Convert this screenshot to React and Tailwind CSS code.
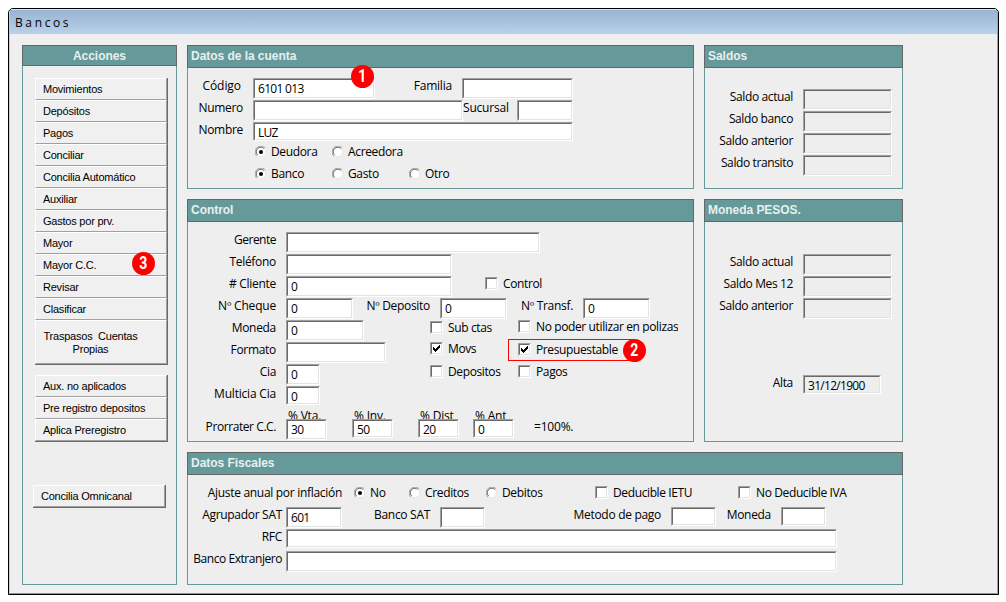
import clsx from 'clsx'

const ACCIONES = [
  'Movimientos',
  'Depósitos',
  'Pagos',
  'Conciliar',
  'Concilia Automático',
  'Auxiliar',
  'Gastos por prv.',
  'Mayor',
  'Mayor C.C.',
  'Revisar',
  'Clasificar',
]

const REGISTROS = ['Aux. no aplicados', 'Pre registro depositos', 'Aplica Preregistro']

const PRORRATEO = [
  { titulo: '% Vta.', valor: '30', clase: 'w-[41px]', alto: 'h-[21px]' },
  { titulo: '% Inv.', valor: '50', clase: 'ml-[25px] w-[41px]', alto: 'h-[19px]' },
  { titulo: '% Dist', valor: '20', clase: 'ml-[25px] w-[41px]', alto: 'h-[19px]' },
  { titulo: '% Ant', valor: '0', clase: 'ml-[14px] w-[41px]', alto: 'h-[19px]' },
]

function Panel({ titulo, className, centrado, children }) {
  return (
    <section className={clsx('flex flex-col', className)}>
      <h2
        className={clsx(
          'shrink-0 border border-[#666666] bg-[#669999] font-["Liberation_Sans",Arial,sans-serif] text-[12px] leading-[20px] font-bold tracking-[-0.04px] whitespace-nowrap text-[#e6f0f0]',
          centrado ? 'h-[21px] text-center' : 'h-[23px] pl-[3px]',
        )}
      >
        {titulo}
      </h2>
      <div className="grow border border-t-0 border-[#669999] bg-[#eeeeee]">{children}</div>
    </section>
  )
}

function Fila({ className, children }) {
  return <div className={clsx('flex h-[22px] items-start', className)}>{children}</div>
}

function Etiqueta({ className, tracking = 'tracking-[-0.3px]', children }) {
  return (
    <span className={clsx('shrink-0 text-right leading-[15px] whitespace-nowrap', tracking, className)}>
      {children}
    </span>
  )
}

function Campo({ valor, className, alto = 'h-[21px]', inactivo }) {
  return (
    <div className={clsx('shrink-0 border border-t-[#a0a0a0] border-r-white border-b-white border-l-[#a0a0a0]', alto, className)}>
      <div
        className={clsx(
          'h-full border border-t-[#696969] border-r-[#e3e3e3] border-b-[#e3e3e3] border-l-[#696969] pl-[3px] leading-[17px] tracking-[-0.7px] whitespace-nowrap',
          inactivo ? 'bg-[#eeeeee]' : 'bg-white',
        )}
      >
        {valor}
      </div>
    </div>
  )
}

function Radio({ activo, className, children }) {
  return (
    <div className={clsx('flex shrink-0 items-start gap-1 tracking-[-0.35px] whitespace-nowrap', className)}>
      <svg className="mt-[2px] h-3 w-3 shrink-0" viewBox="0 0 12 12">
        <circle cx="6" cy="6" r="5" fill="#fff" />
        <path d="M1.8 10.2 A5.5 5.5 0 0 1 10.2 1.8" fill="none" stroke="#a0a0a0" />
        <path d="M2.6 9 A4.5 4.5 0 0 1 9 2.6" fill="none" stroke="#696969" />
        <path d="M2.6 9.4 A4.6 4.6 0 0 0 9.4 2.6" fill="none" stroke="#e3e3e3" />
        {activo && <circle cx="6" cy="6" r="2" fill="#000" />}
      </svg>
      <span className="leading-[15px]">{children}</span>
    </div>
  )
}

function Casilla({ activo, className, children }) {
  return (
    <div className={clsx('flex shrink-0 items-start gap-[5px] tracking-[-0.38px] whitespace-nowrap', className)}>
      <div className="mt-px h-[13px] w-[13px] shrink-0 border border-t-[#a0a0a0] border-r-white border-b-white border-l-[#a0a0a0]">
        <div className="h-[11px] w-[11px] border border-t-[#696969] border-r-[#e3e3e3] border-b-[#e3e3e3] border-l-[#696969] bg-white">
          {activo && (
            <svg className="h-[9px] w-[9px]" viewBox="0 0 9 9" shapeRendering="crispEdges">
              <path d="M1 3h1v1h1v1h1v-1h1v-1h1v-1h1v-1h1v3h-1v1h-1v1h-1v1h-1v1h-1v-1h-1v-1h-1z" />
            </svg>
          )}
        </div>
      </div>
      <span className="leading-[15px]">{children}</span>
    </div>
  )
}

function Boton({ className, children }) {
  return (
    <button
      type="button"
      className={clsx(
        'block w-[132px] border border-t-white border-r-[#a0a0a0] border-b-[#a0a0a0] border-l-white bg-[#f0f0f0] pl-[7px] text-left whitespace-pre',
        className,
      )}
    >
      {children}
    </button>
  )
}

function GrupoBotones({ className, children }) {
  return (
    <div
      className={clsx(
        'w-[133px] border-r border-b border-[#696969] font-["Liberation_Sans",Arial,sans-serif] text-[11px] leading-[20px] tracking-[-0.22px]',
        className,
      )}
    >
      {children}
    </div>
  )
}

// Globo rojo numerado, superpuesto a la ventana
function Marcador({ numero, className }) {
  return (
    <div
      className={clsx(
        'absolute flex h-[23px] w-[23px] items-center justify-center rounded-full bg-[#ff0000] font-[Roboto,sans-serif] text-[18px] leading-none font-bold tracking-normal text-white',
        className,
      )}
    >
      <span className="-mt-px scale-x-[0.78]">{numero}</span>
    </div>
  )
}

function Acciones() {
  return (
    <Panel titulo="Acciones" centrado className="h-[540px] w-[155px]">
      <div className="pt-3 pl-3">
        <GrupoBotones>
          {ACCIONES.map(accion => (
            <Boton key={accion} className="h-[22px]">{accion}</Boton>
          ))}
          <Boton className="h-11 leading-[13px]">
            <span className="block w-[95px] pt-px text-center">{'Traspasos  Cuentas\nPropias'}</span>
          </Boton>
        </GrupoBotones>
        <GrupoBotones className="mt-[10px]">
          {REGISTROS.map(registro => (
            <Boton key={registro} className="h-[22px]">{registro}</Boton>
          ))}
        </GrupoBotones>
        <GrupoBotones className="mt-[43px] -ml-[2px]">
          <Boton className="h-[22px]">Concilia Omnicanal</Boton>
        </GrupoBotones>
      </div>
    </Panel>
  )
}

function DatosCuenta() {
  return (
    <Panel titulo="Datos de la cuenta" className="h-[144px] w-[507px]">
      <div className="pt-[10px]">
        <Fila>
          <Etiqueta tracking="tracking-[-0.05px]" className="w-[53px]">Código</Etiqueta>
          <Campo valor="6101 013" className="ml-3 w-[122px]" />
          <Etiqueta tracking="tracking-[-0.2px]" className="w-[77px]">Familia</Etiqueta>
          <Campo className="ml-[10px] w-[111px]" />
        </Fila>
        <Fila>
          <Etiqueta className="w-[55px]">Numero</Etiqueta>
          <Campo className="ml-[10px] w-[210px]" />
          <Etiqueta tracking="tracking-[-0.2px]" className="w-[44px]">Sucursal</Etiqueta>
          <Campo className="ml-[10px] w-[56px]" />
        </Fila>
        <Fila>
          <Etiqueta className="w-[55px]">Nombre</Etiqueta>
          <Campo valor="LUZ" className="ml-[10px] w-[320px]" alto="h-[19px]" />
        </Fila>
        <Fila className="pl-[67px]">
          <Radio activo className="w-[77px]">Deudora</Radio>
          <Radio>Acreedora</Radio>
        </Fila>
        <Fila className="pl-[67px]">
          <Radio activo className="w-[77px]">Banco</Radio>
          <Radio className="w-[77px]">Gasto</Radio>
          <Radio>Otro</Radio>
        </Fila>
      </div>
    </Panel>
  )
}

function Control() {
  return (
    <Panel titulo="Control" className="h-[243px] w-[507px]">
      <div className="pt-[10px]">
        <Fila>
          <Etiqueta tracking="tracking-[-0.5px]" className="w-[88px]">Gerente</Etiqueta>
          <Campo className="ml-[10px] w-[254px]" />
        </Fila>
        <Fila>
          <Etiqueta className="w-[88px]">Teléfono</Etiqueta>
          <Campo className="ml-[10px] w-[166px]" />
        </Fila>
        <Fila>
          <Etiqueta className="w-[88px]">{'# Cliente'}</Etiqueta>
          <Campo valor="0" className="ml-[10px] w-[166px]" />
          <Casilla className="ml-[33px]">Control</Casilla>
        </Fila>
        <Fila>
          <Etiqueta tracking="tracking-[-0.2px]" className="w-[88px]">Nº Cheque</Etiqueta>
          <Campo valor="0" className="ml-[10px] w-[67px]" />
          <Etiqueta className="w-[77px]">Nº Deposito</Etiqueta>
          <Campo valor="0" className="ml-[10px] w-[67px]" />
          <Etiqueta className="w-[66px]">Nº Transf.</Etiqueta>
          <Campo valor="0" className="ml-[10px] w-[67px]" />
        </Fila>
        <Fila>
          <Etiqueta className="w-[88px]">Moneda</Etiqueta>
          <Campo valor="0" className="ml-[10px] w-[78px]" />
          <Casilla className="ml-[66px] w-[88px]">Sub ctas</Casilla>
          <Casilla className="-mt-px h-[14px] overflow-hidden">No poder utilizar en polizas</Casilla>
        </Fila>
        <Fila>
          <Etiqueta className="w-[88px]">Formato</Etiqueta>
          <Campo className="ml-[10px] w-[100px]" />
          <Casilla activo className="-mt-px ml-[44px] w-[88px]">Movs</Casilla>
          <Casilla activo>Presupuestable</Casilla>
        </Fila>
        <Fila>
          <Etiqueta className="w-[88px]">Cia</Etiqueta>
          <Campo valor="0" className="ml-[10px] w-[34px]" />
          <Casilla className="ml-[110px] w-[88px]">Depositos</Casilla>
          <Casilla>Pagos</Casilla>
        </Fila>
        <Fila>
          <Etiqueta tracking="tracking-[-0.2px]" className="w-[88px]">Multicia Cia</Etiqueta>
          <Campo valor="0" className="ml-[10px] w-[34px]" alto="h-[19px]" />
        </Fila>
        <Fila className="h-[32px]">
          <Etiqueta tracking="tracking-[-0.42px]" className="mt-[11px] w-[88px]">Prorrater C.C.</Etiqueta>
          <div className="ml-[10px] flex">
            {PRORRATEO.map(({ titulo, valor, clase, alto }) => (
              <div key={titulo} className={clase}>
                <div className="h-[11px] overflow-hidden pl-[2px] leading-[15px]">{titulo}</div>
                <Campo valor={valor} alto={alto} />
              </div>
            ))}
          </div>
          <Etiqueta tracking="tracking-[-0.2px]" className="mt-[11px] ml-[20px]">=100%.</Etiqueta>
        </Fila>
      </div>
    </Panel>
  )
}

function FilaSaldo({ etiqueta }) {
  return (
    <Fila>
      <Etiqueta tracking="tracking-[-0.38px]" className="w-[88px]">{etiqueta}</Etiqueta>
      <Campo inactivo className="ml-[10px] w-[89px]" />
    </Fila>
  )
}

function Saldos() {
  return (
    <Panel titulo="Saldos" className="h-[144px] w-[199px]">
      <div className="pt-[21px]">
        {['Saldo actual', 'Saldo banco', 'Saldo anterior', 'Saldo transito'].map(etiqueta => (
          <FilaSaldo key={etiqueta} etiqueta={etiqueta} />
        ))}
      </div>
    </Panel>
  )
}

function MonedaPesos() {
  return (
    <Panel titulo="Moneda PESOS." className="h-[243px] w-[199px]">
      <div className="pt-8">
        {['Saldo actual', 'Saldo Mes 12', 'Saldo anterior'].map(etiqueta => (
          <FilaSaldo key={etiqueta} etiqueta={etiqueta} />
        ))}
        <Fila className="mt-[55px]">
          <Etiqueta className="w-[88px]">Alta</Etiqueta>
          <Campo valor="31/12/1900" inactivo className="ml-[10px] w-[78px]" alto="h-[19px]" />
        </Fila>
      </div>
    </Panel>
  )
}

function DatosFiscales() {
  return (
    <Panel titulo="Datos Fiscales" className="h-[133px] w-[716px]">
      <div className="pt-[10px]">
        <Fila>
          <Etiqueta className="w-[154px]">Ajuste anual por inflación</Etiqueta>
          <Radio activo className="ml-3 w-[55px]">No</Radio>
          <Radio className="w-[77px]">Creditos</Radio>
          <Radio className="w-[109px]">Debitos</Radio>
          <Casilla className="w-[143px]">Deducible IETU</Casilla>
          <Casilla>No Deducible IVA</Casilla>
        </Fila>
        <Fila>
          <Etiqueta className="w-[94px]">Agrupador SAT</Etiqueta>
          <Campo valor="601" className="ml-1 w-[56px]" />
          <Etiqueta className="w-[88px]">Banco SAT</Etiqueta>
          <Campo className="ml-[10px] w-[45px]" />
          <Etiqueta className="w-[176px]">Metodo de pago</Etiqueta>
          <Campo className="ml-[10px] w-[45px]" alto="h-[19px]" />
          <Etiqueta className="w-[55px]">Moneda</Etiqueta>
          <Campo className="ml-[10px] w-[45px]" alto="h-[19px]" />
        </Fila>
        <Fila>
          <Etiqueta className="w-[94px]">RFC</Etiqueta>
          <Campo className="ml-1 w-[551px]" alto="h-[19px]" />
        </Fila>
        <Fila>
          <Etiqueta tracking="tracking-[-0.45px]" className="w-[94px]">Banco Extranjero</Etiqueta>
          <Campo className="ml-1 w-[551px]" />
        </Fila>
      </div>
    </Panel>
  )
}

export default function App() {
  return (
    <div className='relative h-[602px] w-[1006px] overflow-hidden bg-white pt-2 pl-2 font-["Open_Sans","Noto_Sans",sans-serif] text-[12px] leading-[17px] tracking-[-0.2px] text-black'>
      <div className="flex h-[587px] w-[991px] flex-col overflow-hidden rounded-t-[5px] border border-black bg-[#efefef]">
        <div className="flex grow flex-col rounded-t-[4px] border-t border-r border-b border-l border-t-[#d5e5f3] border-r-[#5bbcdc] border-b-[#3fb4d2] border-l-[#b4cfea]">
          <header className="h-[24px] shrink-0 bg-linear-to-b from-[#98b4d2] to-[#b9d1ea] pt-[4px] pl-[5px] tracking-[-0.25px]">
            B a n c o s
          </header>
          <main className="flex gap-[10px] pt-[11px] pl-3">
            <Acciones />
            <div className="flex flex-col gap-[10px]">
              <div className="flex gap-[10px]">
                <DatosCuenta />
                <Saldos />
              </div>
              <div className="flex gap-[10px]">
                <Control />
                <MonedaPesos />
              </div>
              <DatosFiscales />
            </div>
          </main>
        </div>
      </div>
      <div className="absolute top-[339px] left-[508px] h-[22px] w-[126px] border border-[#ff0000]" />
      <Marcador numero="1" className="top-[65px] left-[351px]" />
      <Marcador numero="2" className="top-[339px] left-[623px]" />
      <Marcador numero="3" className="top-[252px] left-[132px]" />
    </div>
  )
}
